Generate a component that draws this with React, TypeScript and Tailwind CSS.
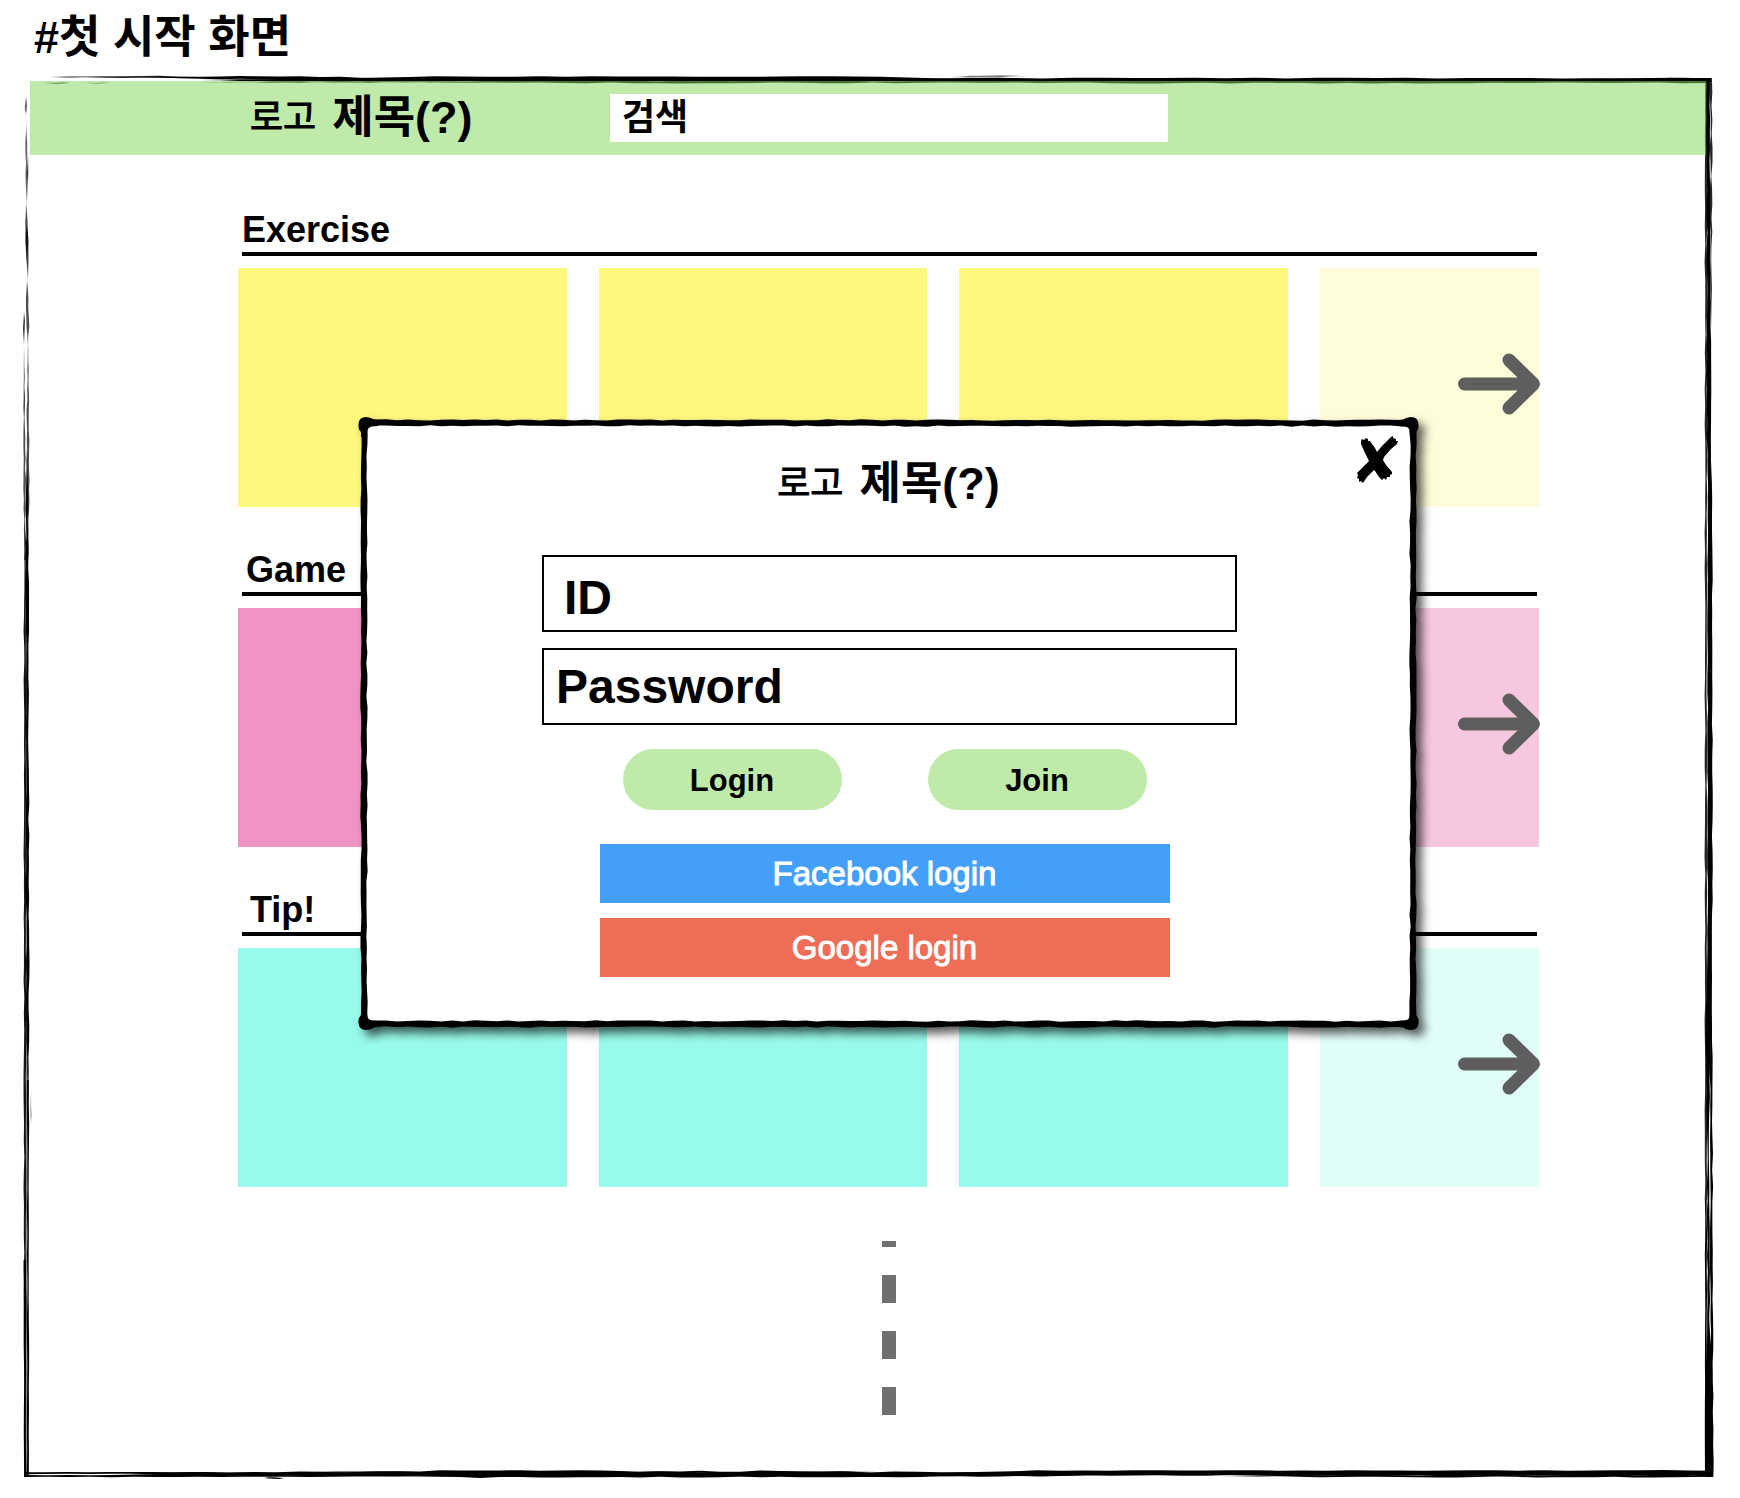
import React from "react";

const FONT = "font-['Liberation_Sans','Noto_Sans_CJK_KR',sans-serif]";

/** Small deterministic noise source so the hand-drawn lines are stable between renders. */
function noise(seed: number) {
  let s = seed * 7919 + 17;
  return () => {
    s = (s * 16807) % 2147483647;
    return s / 2147483647 - 0.5;
  };
}

type Stroke = {
  from: [number, number];
  to: [number, number];
  width: number;
  rough?: number;
  step?: number;
  /** Which ends of the line thin out to a point. */
  taper?: "both" | "start" | "end";
  opacity?: number;
};

/** Outline of an ink line whose two edges wander independently. */
function inkPath(stroke: Stroke, seed: number) {
  const { from, to, width, rough = 1, step = 10, taper } = stroke;
  const rand = noise(seed);
  const dx = to[0] - from[0];
  const dy = to[1] - from[1];
  const len = Math.hypot(dx, dy);
  const n = Math.max(4, Math.round(len / step));
  const nx = -dy / len;
  const ny = dx / len;
  const ramp = Math.min(len * 0.3, 90);
  const a: string[] = [];
  const b: string[] = [];
  for (let i = 0; i <= n; i++) {
    const t = i / n;
    const startFade = taper === "both" || taper === "start" ? Math.min(1, (t * len) / ramp) : 1;
    const endFade = taper === "both" || taper === "end" ? Math.min(1, ((1 - t) * len) / ramp) : 1;
    const fade = Math.min(startFade, endFade);
    const half = (width / 2) * fade;
    const o1 = half + rand() * rough * fade;
    const o2 = half + rand() * rough * fade;
    const x = from[0] + dx * t;
    const y = from[1] + dy * t;
    a.push(`${(x + nx * o1).toFixed(2)} ${(y + ny * o1).toFixed(2)}`);
    b.unshift(`${(x - nx * o2).toFixed(2)} ${(y - ny * o2).toFixed(2)}`);
  }
  return `M${a.join("L")}L${b.join("L")}Z`;
}

const FRAME: Stroke[] = [
  // top edge
  { from: [50, 77], to: [215, 77], width: 1.6, taper: "both", opacity: 0.85, step: 18 },
  { from: [140, 77], to: [420, 79], width: 2.6, taper: "both", step: 20 },
  { from: [200, 80], to: [520, 80], width: 3, taper: "both", step: 20 },
  { from: [330, 79], to: [960, 79], width: 5, rough: 0.6, step: 26, taper: "both" },
  { from: [860, 80], to: [1711, 80], width: 4, rough: 0.8, step: 30, taper: "start" },
  { from: [420, 82], to: [1706, 82], width: 2, rough: 1.2, step: 24, taper: "start" },
  { from: [44, 83], to: [70, 83], width: 1, taper: "both", opacity: 0.7 },
  { from: [84, 83], to: [110, 83], width: 1, taper: "both", opacity: 0.5 },
  { from: [200, 82], to: [460, 82], width: 1.4, taper: "both", opacity: 0.7 },
  { from: [950, 77], to: [1030, 76], width: 1.2, taper: "both", opacity: 0.5 },
  { from: [1565, 79], to: [1630, 79], width: 1.5, taper: "both", opacity: 0.5 },
  { from: [1650, 79], to: [1711, 79], width: 1.6, opacity: 0.8 },
  // left edge
  { from: [26, 97], to: [26, 114], width: 1.5, taper: "both", opacity: 0.6 },
  { from: [26, 122], to: [27, 205], width: 1.8, taper: "both", opacity: 0.6 },
  { from: [28, 155], to: [27, 200], width: 1.4, taper: "both", opacity: 0.5 },
  { from: [26, 202], to: [28, 280], width: 2.4, taper: "both", opacity: 0.7 },
  { from: [27, 225], to: [27, 262], width: 2, taper: "both", opacity: 0.8 },
  { from: [27, 280], to: [28, 345], width: 2.4, taper: "both", opacity: 0.7 },
  { from: [24, 312], to: [24, 345], width: 1.6, taper: "both", opacity: 0.8 },
  { from: [28, 340], to: [28, 560], width: 2, rough: 1.2, opacity: 0.7, taper: "both" },
  { from: [24, 346], to: [25, 560], width: 1.6, rough: 1.2, opacity: 0.7, taper: "start" },
  { from: [27, 440], to: [28, 1120], width: 2.6, rough: 1.2, step: 16, taper: "both" },
  { from: [25, 520], to: [25, 1300], width: 2, rough: 1, step: 16, opacity: 0.9, taper: "start" },
  { from: [26, 540], to: [26, 1476], width: 2.4, rough: 0.8, opacity: 0.45 },
  { from: [31, 1088], to: [31, 1124], width: 1, taper: "both", opacity: 0.5 },
  { from: [28, 1080], to: [28, 1476], width: 1.8, rough: 0.6, step: 22 },
  { from: [25, 1260], to: [25, 1476], width: 2.4, rough: 0.8, step: 22 },
  // bottom edge
  { from: [24, 1476], to: [420, 1476], width: 1.8, rough: 0.5, step: 22, taper: "end" },
  { from: [24, 1473], to: [260, 1473], width: 1.6, rough: 0.8, step: 22, taper: "end" },
  { from: [110, 1474], to: [1060, 1474], width: 4, rough: 1, step: 24, taper: "both" },
  { from: [300, 1472], to: [900, 1472], width: 2, rough: 1.4, step: 20, taper: "both" },
  { from: [380, 1476], to: [1100, 1475], width: 3, rough: 1.4, step: 20, taper: "both" },
  { from: [264, 1478], to: [284, 1478], width: 1.6, taper: "both" },
  { from: [940, 1473], to: [1713, 1473], width: 5, rough: 0.8, step: 24, taper: "start" },
  { from: [1220, 1476], to: [1713, 1476], width: 2, rough: 1.2, step: 20, taper: "start" },
  // right edge
  { from: [1708, 78], to: [1709, 400], width: 3.2, rough: 1, step: 14, taper: "end" },
  { from: [1711, 78], to: [1711, 330], width: 1.8, rough: 1.6, step: 14, opacity: 0.85, taper: "end" },
  { from: [1706, 82], to: [1706, 1200], width: 2, rough: 1, step: 18, opacity: 0.85 },
  { from: [1709, 260], to: [1709, 520], width: 4.4, rough: 1, step: 16, taper: "both" },
  { from: [1710, 420], to: [1710, 1060], width: 4.6, rough: 1, step: 16, taper: "both" },
  { from: [1708, 940], to: [1708, 1160], width: 4, rough: 1, step: 16, taper: "both" },
  { from: [1711, 960], to: [1712, 1477], width: 2.4, rough: 1, step: 16, taper: "start" },
  { from: [1708, 1100], to: [1709, 1400], width: 2.2, rough: 1.2, step: 14, taper: "start" },
  { from: [1706, 1200], to: [1706, 1476], width: 1.8, rough: 0.6, step: 18 },
  { from: [1709, 1320], to: [1709, 1477], width: 7, rough: 0.4, step: 18, taper: "start" },
];

function SketchFrame() {
  return (
    <svg
      className="pointer-events-none absolute inset-0 h-full w-full"
      viewBox="0 0 1740 1498"
      preserveAspectRatio="none"
      aria-hidden="true"
    >
      {FRAME.map((s, i) => (
        <path key={i} d={inkPath(s, i + 3)} opacity={s.opacity ?? 1} />
      ))}
    </svg>
  );
}

const DIALOG_EDGES: Stroke[] = [
  { from: [10, 10], to: [1060, 10], width: 6, rough: 1.4, step: 11 },
  { from: [1060, 10], to: [1060, 611], width: 6, rough: 1.4, step: 11 },
  { from: [10, 611], to: [1060, 611], width: 6, rough: 1.4, step: 11 },
  { from: [10, 10], to: [10, 611], width: 6, rough: 1.4, step: 11 },
];

/** Ink blob for the top-left corner; the other corners mirror it. */
const CORNER = "M4.500 11Q5 4 12 4Q16 4 20 6.500L24 7V13Q15 13 14 16Q13 18 13 24H7V19Q4 16 4.500 11Z";

function DialogFrame() {
  return (
    <svg
      className="pointer-events-none absolute -top-[10px] -left-[10px] h-[calc(100%+20px)] w-[calc(100%+20px)] overflow-visible drop-shadow-[6px_6px_5px_rgba(0,0,0,0.65)]"
      viewBox="0 0 1070 621"
      preserveAspectRatio="none"
      aria-hidden="true"
    >
      <rect x="10" y="10" width="1050" height="601" fill="#fff" />
      {DIALOG_EDGES.map((s, i) => (
        <path key={i} d={inkPath(s, i + 60)} />
      ))}
      <path d={CORNER} />
      <path d={CORNER} transform="matrix(-1 0 0 1 1070 0)" />
      <path d={CORNER} transform="matrix(1 0 0 -1 0 621)" />
      <path d={CORNER} transform="matrix(-1 0 0 -1 1070 621)" />
    </svg>
  );
}

function Arrow() {
  return (
    <svg
      className="h-[64px] w-[84px]"
      viewBox="0 0 84 64"
      fill="none"
      stroke="#5e5e5e"
      strokeLinecap="round"
      strokeLinejoin="round"
      aria-hidden="true"
    >
      <path d="M7.500 32H74" strokeWidth="13" />
      <path d="M52 8L76.500 32L52 56" strokeWidth="13" />
      <path d="M62 24V40L74 32Z" fill="#5e5e5e" strokeWidth="2" />
    </svg>
  );
}

function CloseMark() {
  return (
    <svg className="h-[50px] w-[44px]" viewBox="0 0 44 50" aria-hidden="true">
      <path d="M6 6L7 4L9 5L11 3L13 4L13 6L15 6L20 13L22 17L27 11L36 2L38 1L38 3L41 4L41 6L43 6L42 9L36 14L29 22L28 25L31 30L37 37L37 39L35 40L35 42L32 42L31 45L29 43L27 45L24 42L20 36L19 35L12 42L8 48L6 46L4 47L4 44L2 43L3 40L2 38L7 33L14 26L10 18L6 9Z" />
    </svg>
  );
}

function Brand({ as: Tag }: { as: "p" | "h2" }) {
  return (
    <Tag className="flex items-center gap-4 leading-[60px] whitespace-nowrap">
      <span className="text-[36px] [-webkit-text-stroke:1px_black]">로고</span>
      <span className="text-[45px] font-bold">제목(?)</span>
    </Tag>
  );
}

type Section = { title: string; indent: string; card: string; faded: string };

const SECTIONS: Section[] = [
  { title: "Exercise", indent: "pl-[4px]", card: "bg-[#fff87f]", faded: "bg-[#fefdda]" },
  { title: "Game", indent: "pl-[8px]", card: "bg-[#f094c3]", faded: "bg-[#f5c8e0]" },
  { title: "Tip!", indent: "pl-[12px]", card: "bg-[#98faea]", faded: "bg-[#e0fdf8]" },
];

function CardRow({ title, indent, card, faded }: Section) {
  return (
    <section>
      <h2 className={`text-[36px] leading-[40px] font-bold ${indent}`}>{title}</h2>
      <div className="mt-[2px] mr-[2px] ml-[4px] h-[4px] bg-black" />
      <div className="mt-[12px] grid h-[239px] grid-cols-[3fr_3fr_3fr_2fr] gap-8">
        <div className={card} />
        <div className={card} />
        <div className={card} />
        <div className={`flex items-center justify-end pb-2 ${faded}`}>
          <button type="button" aria-label={`More ${title}`} className="-mr-[2px]">
            <Arrow />
          </button>
        </div>
      </div>
    </section>
  );
}

function LoginDialog() {
  return (
    <div role="dialog" aria-label="Login" className="absolute inset-x-[126px] top-[213px] h-[601px]">
      <DialogFrame />
      <div className="relative flex flex-col items-center pt-[31px]">
        <button type="button" aria-label="Close" className="absolute top-[12px] right-[14px]">
          <CloseMark />
        </button>
        <Brand as="h2" />
        <form className="flex w-full flex-col items-center" onSubmit={(e) => e.preventDefault()}>
          <div className="mt-[41px] flex w-full flex-col gap-4 pr-[176px] pl-[178px]">
            <input
              aria-label="ID"
              placeholder="ID"
              className="h-[77px] w-full border-2 border-black bg-white pt-2 pl-5 text-[48px] font-bold outline-none placeholder:text-black"
            />
            <input
              type="password"
              aria-label="Password"
              placeholder="Password"
              className="h-[77px] w-full border-2 border-black bg-white pl-3 text-[48px] font-bold outline-none placeholder:text-black"
            />
          </div>
          <div className="flex w-full flex-col items-center pr-2">
            <div className="mt-6 flex gap-[86px]">
              <button type="submit" className="h-[61px] w-[219px] rounded-full bg-[#c0eaa9] pt-1 text-[31px] font-bold">
                Login
              </button>
              <button type="button" className="h-[61px] w-[219px] rounded-full bg-[#c0eaa9] pt-1 text-[31px] font-bold">
                Join
              </button>
            </div>
            <div className="mt-[34px] flex w-[570px] flex-col gap-[15px] text-[33px] text-white [-webkit-text-stroke:1px_white]">
              <button type="button" className="h-[59px] bg-[#449ff8]">
                Facebook login
              </button>
              <button type="button" className="h-[59px] bg-[#ee6d57]">
                Google login
              </button>
            </div>
          </div>
        </form>
      </div>
    </div>
  );
}

export default function App() {
  return (
    <div className={`relative bg-white pb-[83px] text-black ${FONT}`}>
      <SketchFrame />
      <h1 className="h-[81px] pl-[34px] text-[45px] leading-[76px] font-bold">#첫 시작 화면</h1>
      <header className="relative mr-[34px] ml-[30px] flex h-[74px] items-center bg-[#88d75c]/53 pl-[220px]">
        <div className="w-[360px] shrink-0">
          <Brand as="p" />
        </div>
        <input
          type="search"
          aria-label="검색"
          placeholder="검색"
          className="h-[48px] w-[558px] bg-white pl-3 text-[36px] font-bold outline-none placeholder:text-black"
        />
      </header>
      <main className="relative mt-[55px] mr-[201px] ml-[238px]">
        <div className="flex flex-col gap-[43px]">
          {SECTIONS.map((s) => (
            <CardRow key={s.title} {...s} />
          ))}
        </div>
        <div className="mt-[54px] flex flex-col items-center gap-7" aria-hidden="true">
          <div className="h-[6px] w-[14px] bg-[#6f6f6f]" />
          <div className="h-[28px] w-[14px] bg-[#6f6f6f]" />
          <div className="h-[28px] w-[14px] bg-[#6f6f6f]" />
          <div className="h-[28px] w-[14px] bg-[#6f6f6f]" />
        </div>
        <LoginDialog />
      </main>
    </div>
  );
}
